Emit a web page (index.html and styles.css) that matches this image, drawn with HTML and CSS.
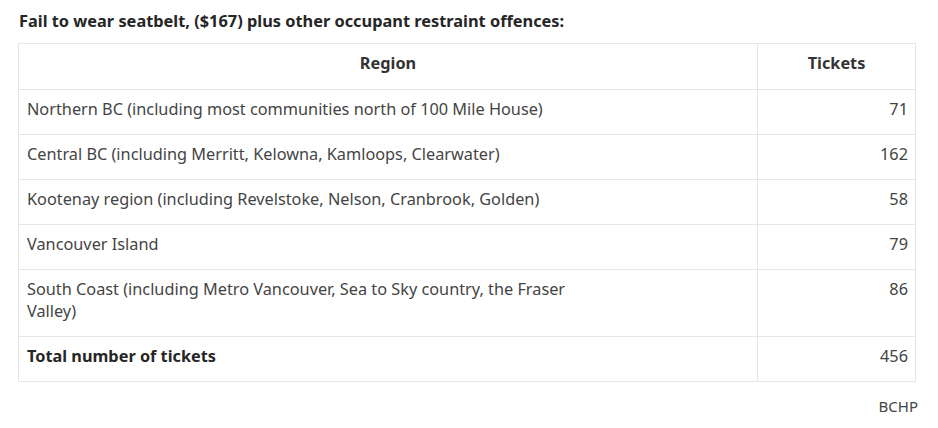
FILE: index.html
```html
<!DOCTYPE html>
<html>
<head>
<meta charset="utf-8">
<link rel="stylesheet" href="styles.css">
</head>
<body>
<div class="wrap">
  <h3 class="title">Fail to wear seatbelt, ($167) plus other occupant restraint offences:</h3>
  <table class="data">
    <thead>
      <tr><th class="region">Region</th><th class="num-h">Tickets</th></tr>
    </thead>
    <tbody>
      <tr><td><span class="txt">Northern BC (including most communities north of 100 Mile House)</span></td><td class="num">71</td></tr>
      <tr><td><span class="txt">Central BC (including Merritt, Kelowna, Kamloops, Clearwater)</span></td><td class="num">162</td></tr>
      <tr><td><span class="txt">Kootenay region (including Revelstoke, Nelson, Cranbrook, Golden)</span></td><td class="num">58</td></tr>
      <tr><td><span class="txt">Vancouver Island</span></td><td class="num">79</td></tr>
      <tr><td><span class="txt">South Coast (including Metro Vancouver, Sea to Sky country, the Fraser Valley)</span></td><td class="num">86</td></tr>
      <tr><td class="bold">Total number of tickets</td><td class="num">456</td></tr>
    </tbody>
  </table>
  <div class="source">BCHP</div>
</div>
</body>
</html>
```
FILE: styles.css
```css
html, body {
  margin: 0;
  padding: 0;
  background: #ffffff;
}
body {
  font-family: "Noto Sans", "Open Sans", sans-serif;
  color: #444444;
  font-size: 16.3px;
}
.wrap {
  width: 898px;
  padding: 10px 0 0 18px;
}
.title {
  margin: 0 0 11px 1px;
  font-size: 16.35px;
  line-height: 22px;
  font-weight: 700;
  color: #262626;
}
.data {
  width: 898px;
  border-collapse: collapse;
  border: 1px solid #e6e6e6;
}
.data th, .data td {
  border: 1px solid #e6e6e6;
  padding: 8px 8px 14px 8px;
  line-height: 22px;
  vertical-align: top;
  text-align: left;
}
.data th {
  font-weight: 700;
  text-align: center;
  color: #333333;
  padding-bottom: 15px;
}
.data th.num-h {
  width: 141px;
}
.txt {
  display: block;
  max-width: 560px;
}
.data td.num {
  text-align: right;
  padding-right: 7px;
}
.bold {
  font-weight: 700;
  color: #262626;
}
.source {
  text-align: right;
  margin-top: 14px;
  font-size: 15px;
  line-height: 20px;
  color: #444444;
  margin-right: -2px;
}
```
